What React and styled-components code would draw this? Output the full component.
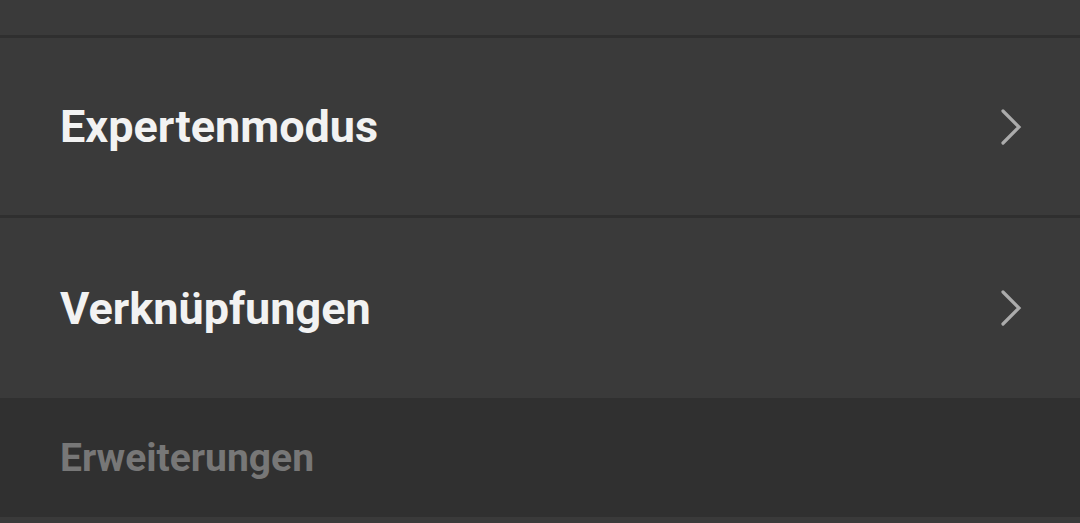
import React from "react";
import styled, { createGlobalStyle } from "styled-components";

const Global = createGlobalStyle`
  html, body { margin: 0; padding: 0; background: #3a3a3a; }
  body { font-family: Roboto, "Noto Sans", sans-serif; overflow: hidden; }
`;

const Page = styled.div`
  width: 1080px;
  height: 523px;
  background: #3a3a3a;
  display: flex;
  flex-direction: column;
  overflow: hidden;
`;

const TopRow = styled.div`
  height: 35px;
  flex: none;
  background: #3a3a3a;
`;

const Divider = styled.div`
  height: 3px;
  flex: none;
  background: #2f2f2f;
`;

const Row = styled.div`
  height: ${(p) => p.$h}px;
  flex: none;
  display: flex;
  align-items: center;
  justify-content: space-between;
  padding: 0 57px 0 60px;
  background: #3a3a3a;
`;

const Title = styled.span`
  font-size: 45px;
  font-weight: 700;
  color: #f2f2f2;
`;

const SectionHeader = styled.div`
  height: 119px;
  flex: none;
  display: flex;
  align-items: center;
  padding: 0 60px;
  background: #303030;
`;

const SectionTitle = styled.span`
  font-size: 39px;
  font-weight: 700;
  color: #777777;
`;

const Rest = styled.div`
  flex: 1;
  background: #3a3a3a;
`;

const Chevron = () => (
  <svg width="24" height="36" viewBox="0 0 24 36" fill="none">
    <path d="M4 2 L20 18 L4 34" stroke="#ababab" strokeWidth="3.2" strokeLinecap="round" strokeLinejoin="miter" />
  </svg>
);

export default function App() {
  return (
    <Page>
      <Global />
      <TopRow />
      <Divider />
      <Row $h={177}>
        <Title>Expertenmodus</Title>
        <Chevron />
      </Row>
      <Divider />
      <Row $h={180}>
        <Title>Verknüpfungen</Title>
        <Chevron />
      </Row>
      <SectionHeader>
        <SectionTitle>Erweiterungen</SectionTitle>
      </SectionHeader>
      <Rest />
    </Page>
  );
}
